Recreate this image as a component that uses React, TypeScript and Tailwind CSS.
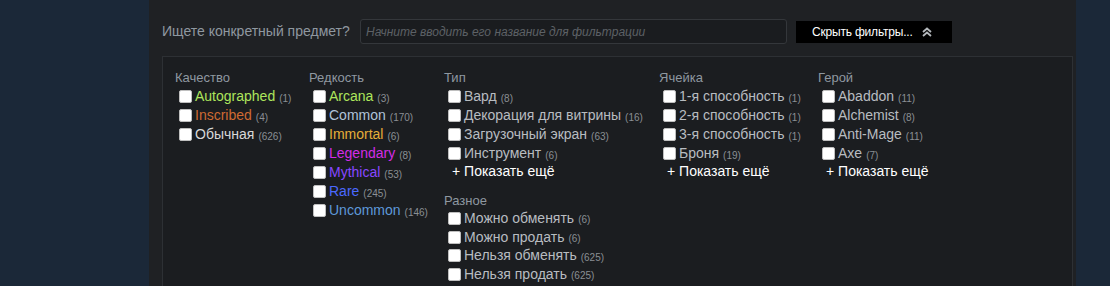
import React from "react";

type Item = { label: string; count: string; color?: string };

const Box = () => (
  <span className="w-[13px] h-[13px] bg-white border border-[#bfbfbf] rounded-[2px] shrink-0 mr-[3px]" />
);

const Row = ({ item }: { item: Item }) => (
  <div className="h-[19px] flex items-center pl-[4px] whitespace-nowrap">
    <Box />
    <span className="text-[14px]" style={{ color: item.color ?? "#b8bcc0" }}>
      {item.label}
    </span>
    <span className="text-[10px] text-[#8a8f94] ml-[4px] mt-[3px]">{item.count}</span>
  </div>
);

const Header = ({ children }: { children: React.ReactNode }) => (
  <div className="h-[19px] flex items-center text-[13px] text-[#8f98a0]">{children}</div>
);

const More = () => (
  <div className="h-[17px] flex items-center pl-[8px] text-[14px] text-white whitespace-nowrap">+ Показать ещё</div>
);

export default function App() {
  const quality: Item[] = [
    { label: "Autographed", count: "(1)", color: "#ade55c" },
    { label: "Inscribed", count: "(4)", color: "#cf6a32" },
    { label: "Обычная", count: "(626)", color: "#d8d8d8" },
  ];
  const rarity: Item[] = [
    { label: "Arcana", count: "(3)", color: "#ade55c" },
    { label: "Common", count: "(170)", color: "#b0c3d9" },
    { label: "Immortal", count: "(6)", color: "#e4ae39" },
    { label: "Legendary", count: "(8)", color: "#d32ce6" },
    { label: "Mythical", count: "(53)", color: "#8847ff" },
    { label: "Rare", count: "(245)", color: "#4b69ff" },
    { label: "Uncommon", count: "(146)", color: "#5e98d9" },
  ];
  const type: Item[] = [
    { label: "Вард", count: "(8)" },
    { label: "Декорация для витрины", count: "(16)" },
    { label: "Загрузочный экран", count: "(63)" },
    { label: "Инструмент", count: "(6)" },
  ];
  const misc: Item[] = [
    { label: "Можно обменять", count: "(6)" },
    { label: "Можно продать", count: "(6)" },
    { label: "Нельзя обменять", count: "(625)" },
    { label: "Нельзя продать", count: "(625)" },
  ];
  const slot: Item[] = [
    { label: "1-я способность", count: "(1)" },
    { label: "2-я способность", count: "(1)" },
    { label: "3-я способность", count: "(1)" },
    { label: "Броня", count: "(19)" },
  ];
  const hero: Item[] = [
    { label: "Abaddon", count: "(11)" },
    { label: "Alchemist", count: "(8)" },
    { label: "Anti-Mage", count: "(11)" },
    { label: "Axe", count: "(7)" },
  ];

  return (
    <div
      className="w-[1110px] h-[286px] overflow-hidden bg-[#1b2838] flex"
      style={{ fontFamily: '"Liberation Sans", Arial, sans-serif' }}
    >
      <div className="ml-[149px] w-[927px] h-full bg-[#1f2124] pl-[13px] pr-[3px] pt-[19px]">
        <div className="flex items-center h-[25px]">
          <div className="text-[14px] text-[#8f98a0] w-[198px] whitespace-nowrap">Ищете конкретный предмет?</div>
          <div className="w-[427px] h-[25px] bg-[#1a1c1f] border border-[#34373b] rounded-[3px] flex items-center pl-[5px]">
            <span className="text-[12px] italic text-[#5d6166] whitespace-nowrap">
              Начните вводить его название для фильтрации
            </span>
          </div>
          <div className="ml-[9px] w-[156px] h-[22px] bg-black flex items-center pl-[16px]">
            <span className="text-[12px] text-white whitespace-nowrap tracking-[-0.2px]">Скрыть фильтры...</span>
            <svg className="ml-[9px]" width="10" height="10" viewBox="0 0 10 10" fill="none" stroke="#b4b8bc" strokeWidth="1.8">
              <path d="M1 5 L5 1.5 L9 5" />
              <path d="M1 9 L5 5.5 L9 9" />
            </svg>
          </div>
        </div>
        <div className="mt-[12px] h-[300px] bg-[#1b1d20] border border-[#2d3034] pl-[12px] pt-[11px] flex">
          <div className="w-[134px]">
            <Header>Качество</Header>
            {quality.map((i) => (
              <Row key={i.label} item={i} />
            ))}
          </div>
          <div className="w-[135px]">
            <Header>Редкость</Header>
            {rarity.map((i) => (
              <Row key={i.label} item={i} />
            ))}
          </div>
          <div className="w-[215px]">
            <Header>Тип</Header>
            {type.map((i) => (
              <Row key={i.label} item={i} />
            ))}
            <More />
            <div className="h-[11px]" />
            <Header>Разное</Header>
            <div className="-mt-[1px]">
              {misc.map((i) => (
                <div key={i.label} className="h-[18.7px] flex items-center">
                  <div className="w-full">
                    <Row item={i} />
                  </div>
                </div>
              ))}
            </div>
          </div>
          <div className="w-[159px]">
            <Header>Ячейка</Header>
            {slot.map((i) => (
              <Row key={i.label} item={i} />
            ))}
            <More />
          </div>
          <div className="w-[159px]">
            <Header>Герой</Header>
            {hero.map((i) => (
              <Row key={i.label} item={i} />
            ))}
            <More />
          </div>
        </div>
      </div>
    </div>
  );
}
